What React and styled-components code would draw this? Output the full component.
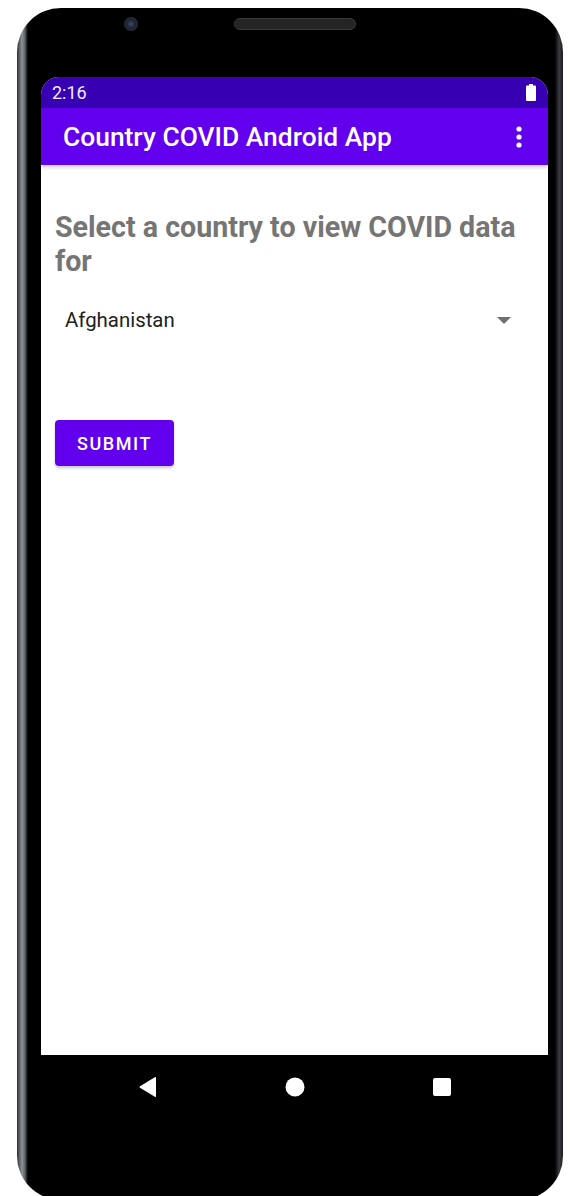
import React from 'react';
import styled, { createGlobalStyle } from 'styled-components';

const GlobalStyle = createGlobalStyle`
  html, body {
    margin: 0;
    padding: 0;
    background: #fff;
    overflow: hidden;
    font-family: Roboto, "Noto Sans", sans-serif;
  }
`;

const Frame = styled.div`
  margin: 8px 0 0 17px;
  width: 546px;
  height: 1192px;
  box-sizing: border-box;
  padding: 0 15px 0 24px;
  border-radius: 44px;
  background: linear-gradient(
    90deg,
    #2a2b2d 0,
    #55585d 2px,
    #8e9197 5px,
    #5d6066 8px,
    #1b1b1c 10px,
    #000 11px,
    #000 calc(100% - 8px),
    #3b3c40 calc(100% - 4px),
    #1d1d1f 100%
  );
  display: flex;
  flex-direction: column;
`;

const TopBar = styled.div`
  height: 69px;
  display: flex;
  align-items: flex-start;
  padding-top: 9px;
  box-sizing: border-box;
`;

const Camera = styled.div`
  width: 14px;
  height: 14px;
  margin: 0 0 0 83px;
  border-radius: 50%;
  background: radial-gradient(circle at 50% 50%, #3b4a6b 0, #1c2233 45%, #2a2c31 70%, #111 100%);
`;

const Speaker = styled.div`
  width: 122px;
  height: 12px;
  margin: 1px 0 0 96px;
  border-radius: 6px;
  background: #242424;
  border: 1px solid #3a3a3a;
  box-sizing: border-box;
`;

const Screen = styled.div`
  height: 978px;
  background: #fff;
  border-radius: 18px 18px 0 0;
  overflow: hidden;
  display: flex;
  flex-direction: column;
`;

const StatusBar = styled.div`
  height: 31px;
  flex-shrink: 0;
  background: #3700b3;
  display: flex;
  align-items: center;
  justify-content: space-between;
  padding: 0 12px 0 11px;
  color: #f2ecff;
  font-size: 18px;
`;

const Toolbar = styled.div`
  height: 57px;
  flex-shrink: 0;
  background: #6200ee;
  display: flex;
  align-items: center;
  justify-content: space-between;
  padding: 0 26px 0 22px;
  box-shadow: 0 2px 4px rgba(0, 0, 0, 0.22);
  position: relative;
  z-index: 1;
`;

const Title = styled.h1`
  margin: 0;
  font-size: 26.4px;
  font-weight: 500;
  color: #fff;
`;

const Content = styled.div`
  padding: 45px 14px 0 14px;
  display: flex;
  flex-direction: column;
  align-items: flex-start;
`;

const Heading = styled.h2`
  margin: 0;
  font-size: 28.6px;
  line-height: 34px;
  font-weight: 700;
  color: #757575;
`;

const Spinner = styled.div`
  align-self: stretch;
  margin-top: 18px;
  height: 48px;
  display: flex;
  align-items: center;
  justify-content: space-between;
  padding: 0 23px 0 10px;
  font-size: 20.4px;
  color: #212121;
`;

const Button = styled.button`
  margin-top: 76px;
  width: 119px;
  height: 46px;
  border: none;
  border-radius: 4px;
  background: #6200ee;
  color: #fff;
  font-family: Roboto, sans-serif;
  font-size: 18px;
  font-weight: 500;
  letter-spacing: 1.6px;
  box-shadow: 0 2px 3px rgba(0, 0, 0, 0.22);
`;

const NavBar = styled.div`
  display: flex;
  justify-content: center;
  gap: 127px;
  padding-top: 22px;
`;

const NavIcon = styled.svg`
  width: 20px;
  height: 20px;
  fill: #fff;
`;

const Battery = () => (
  <svg width="10" height="17" viewBox="0 0 10 17">
    <rect x="3" y="0" width="4" height="2" fill="#fff" />
    <rect x="0" y="1.5" width="10" height="15.5" rx="1" fill="#fff" />
  </svg>
);

const MoreVert = () => (
  <svg width="6" height="22" viewBox="0 0 6 22">
    <circle cx="3" cy="3" r="2.6" fill="#fff" />
    <circle cx="3" cy="11" r="2.6" fill="#fff" />
    <circle cx="3" cy="19" r="2.6" fill="#fff" />
  </svg>
);

const DropArrow = () => (
  <svg width="14" height="7" viewBox="0 0 14 7">
    <path d="M0 0 L14 0 L7 7 Z" fill="#6f6f6f" />
  </svg>
);

const App = () => {
  return (
    <>
      <GlobalStyle />
      <Frame>
        <TopBar>
          <Camera />
          <Speaker />
        </TopBar>
        <Screen>
          <StatusBar>
            <span>2:16</span>
            <Battery />
          </StatusBar>
          <Toolbar>
            <Title>Country COVID Android App</Title>
            <MoreVert />
          </Toolbar>
          <Content>
            <Heading>Select a country to view COVID data for</Heading>
            <Spinner>
              <span>Afghanistan</span>
              <DropArrow />
            </Spinner>
            <Button>SUBMIT</Button>
          </Content>
        </Screen>
        <NavBar>
          <NavIcon viewBox="0 0 20 20">
            <path d="M18 1 L18 19 Q18 20.5 16.8 19.8 L2 10.8 Q1 10 2 9.2 L16.8 0.2 Q18 -0.5 18 1 Z" />
          </NavIcon>
          <NavIcon viewBox="0 0 20 20">
            <circle cx="10" cy="10" r="9.5" />
          </NavIcon>
          <NavIcon viewBox="0 0 20 20">
            <rect x="1" y="1" width="18" height="18" rx="2" />
          </NavIcon>
        </NavBar>
      </Frame>
    </>
  );
};

export default App;
